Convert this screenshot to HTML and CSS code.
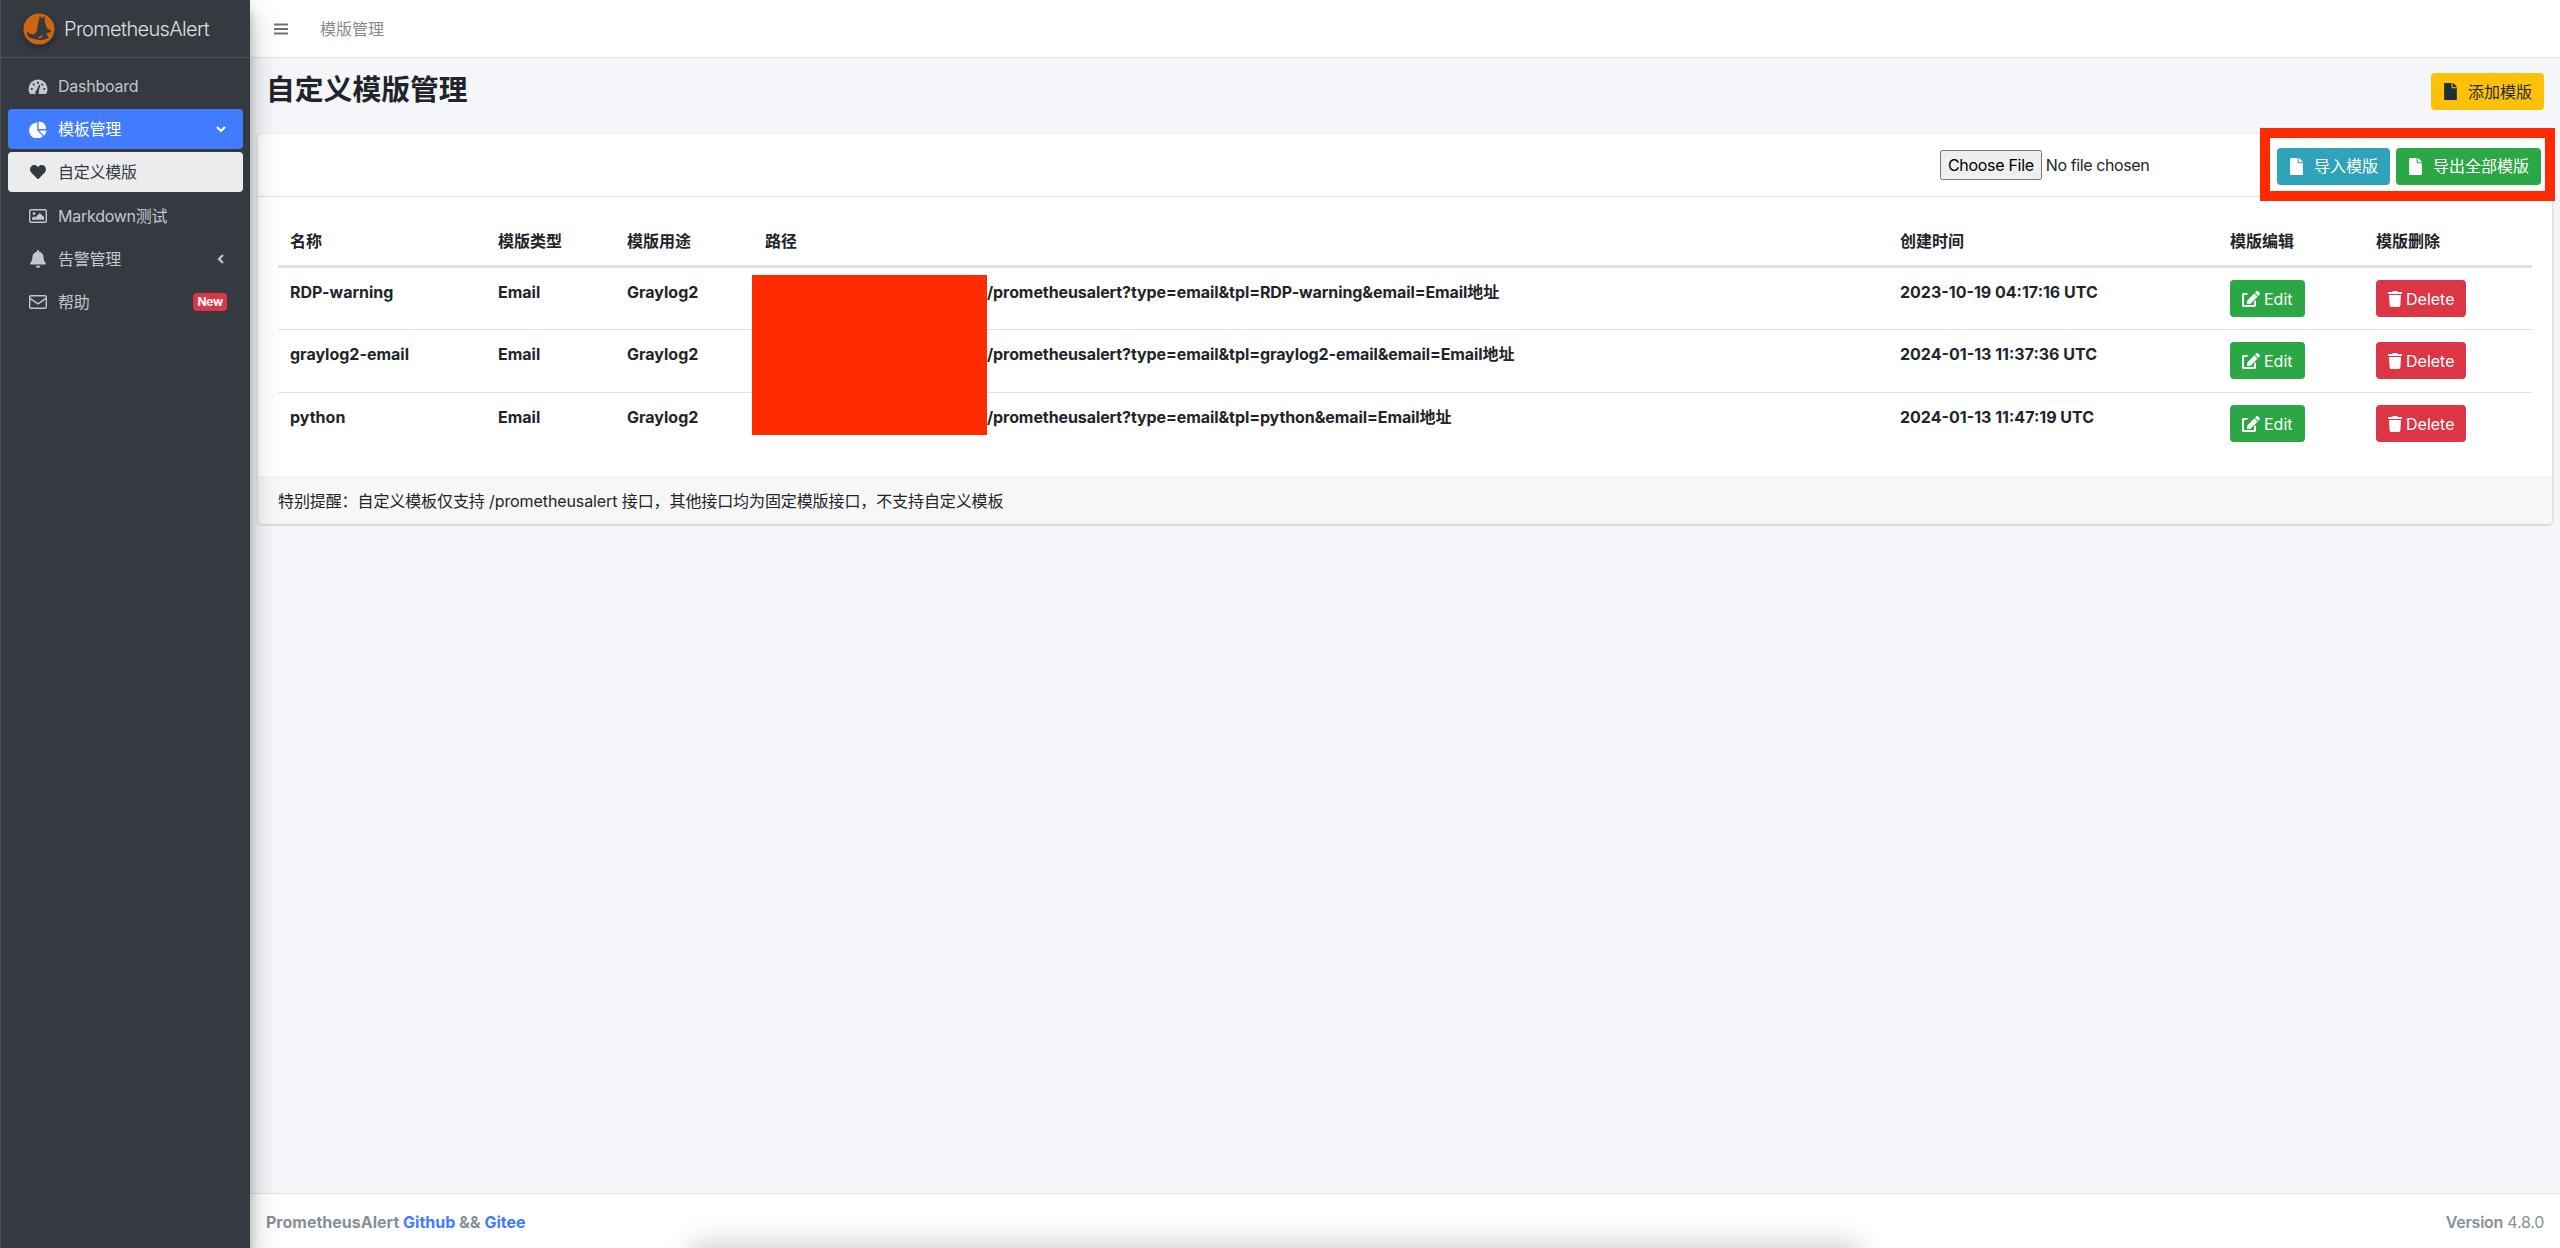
FILE: index.html
```html
<!DOCTYPE html>
<html lang="zh">
<head>
<meta charset="utf-8">
<title>PrometheusAlert</title>
<link rel="stylesheet" href="styles.css">
</head>
<body>
<svg class="defs" aria-hidden="true">
  <symbol id="i-file" viewBox="0 0 384 512"><path d="M224 136V0H24C10.7 0 0 10.7 0 24v464c0 13.3 10.7 24 24 24h336c13.3 0 24-10.7 24-24V160H248c-13.2 0-24-10.8-24-24zm160-14.1v6.1H256V0h6.1c6.4 0 12.5 2.5 17 7l97.9 98c4.5 4.5 7 10.6 7 16.9z"/></symbol>
  <symbol id="i-edit" viewBox="0 0 576 512"><path d="M402.6 83.2l90.2 90.2c3.8 3.8 3.8 10 0 13.8L274.4 405.6l-92.8 10.3c-12.4 1.4-22.9-9.1-21.5-21.5l10.3-92.8L388.8 83.2c3.8-3.8 10-3.8 13.8 0zm162-22.9l-48.8-48.8c-15.2-15.2-39.9-15.2-55.2 0l-35.4 35.4c-3.8 3.8-3.8 10 0 13.8l90.2 90.2c3.8 3.8 10 3.8 13.8 0l35.4-35.4c15.2-15.3 15.2-40 0-55.2zM384 346.2V448H64V128h73.9c3.2 0 6.2-1.3 8.5-3.5l40-40c7.6-7.6 2.2-20.5-8.5-20.5H48C21.5 64 0 85.5 0 112v352c0 26.5 21.5 48 48 48h352c26.5 0 48-21.5 48-48V306.2c0-10.7-12.9-16-20.5-8.5l-40 40c-2.2 2.3-3.5 5.3-3.5 8.5z"/></symbol>
  <symbol id="i-trash" viewBox="0 0 448 512"><path d="M432 32H312l-9.4-18.7A24 24 0 0 0 281.1 0H166.8a23.72 23.72 0 0 0-21.4 13.3L136 32H16A16 16 0 0 0 0 48v32a16 16 0 0 0 16 16h416a16 16 0 0 0 16-16V48a16 16 0 0 0-16-16zM53.2 467a48 48 0 0 0 47.9 45h245.8a48 48 0 0 0 47.9-45L416 128H32z"/></symbol>
</svg>
<div class="app">
  <aside class="sidebar">
    <div class="brand">
      <svg class="logo" viewBox="0 0 32 32">
        <circle cx="16" cy="16" r="15.5" fill="#cf650f"/>
        <path fill="#343a40" d="M16 6.400L17 2.800 18.800 5.700 21.300 2.800 22 10 24 15 29 19 23.500 20 25.600 25 21 26.500 17.800 27.200 11.400 26 7.500 25 5 23.200 3.600 17.800 6.400 20.600 10.700 21.700 13.800 18.500 14.500 14 15 10.700z"/>
        <path fill="#cf650f" d="M14.500 23.600Q17 24.400 20 21.500 19.500 25 16.500 25.400z"/>
      </svg>
      <span class="brand-text">PrometheusAlert</span>
    </div>
    <nav class="nav">
      <a class="nav-link">
        <span class="nav-icon"><svg viewBox="0 0 20 16" class="ic-w20"><path fill="currentColor" d="M10 1a9.5 9.5 0 0 0-9.500 9.500c0 1.700.4 3.200 1.200 4.500.2.300.5.500.9.500h14.800c.4 0 .7-.2.900-.5.800-1.300 1.200-2.800 1.200-4.500A9.500 9.500 0 0 0 10 1z"/><g fill="#343a40"><circle cx="3.800" cy="10.500" r="1.100"/><circle cx="16.200" cy="10.500" r="1.100"/><circle cx="5.700" cy="6" r="1.100"/><circle cx="10" cy="4.300" r="1.100"/><circle cx="14.300" cy="6" r="1.100"/><path d="M8.200 12.600l3-6.400 1.100.4-1.700 6.700a1.800 1.800 0 1 1-2.400-.7z"/></g></svg></span>
        <span>Dashboard</span>
      </a>
      <a class="nav-link is-active">
        <span class="nav-icon"><svg viewBox="0 0 544 512" class="ic-w20"><path fill="currentColor" d="M250 48v238l168 168A240 240 0 1 1 250 48zM290 12a228 228 0 0 1 228 228H290zM300 284h226a238 238 0 0 1-70 162z"/></svg></span>
        <span>模板管理</span>
        <svg class="caret" viewBox="0 0 12 12"><path d="M2 4l4 4 4-4"/></svg>
      </a>
      <a class="nav-link is-current">
        <span class="nav-icon"><svg viewBox="0 0 512 512" class="ic-w18"><path fill="currentColor" d="M462.3 62.600C407.500 15.900 326 24.300 275.700 76.200L256 96.500l-19.700-20.300C186.100 24.300 104.500 15.900 49.700 62.600c-62.800 53.600-66.100 149.800-9.900 207.900l193.500 199.800c12.500 12.900 32.800 12.900 45.300 0l193.500-199.800c56.300-58.100 53-154.300-9.800-207.900z"/></svg></span>
        <span>自定义模版</span>
      </a>
      <a class="nav-link">
        <span class="nav-icon"><svg viewBox="0 0 18 14" class="ic-w18"><rect x=".7" y=".7" width="16.600" height="12.600" rx="1.400" fill="none" stroke="currentColor" stroke-width="1.400"/><circle cx="5" cy="4.600" r="1.300" fill="currentColor"/><path fill="currentColor" d="M3 10.800V9l2-1.800 1.300 1.200L10.800 4 15 8v2.800z"/></svg></span>
        <span>Markdown测试</span>
      </a>
      <a class="nav-link">
        <span class="nav-icon"><svg viewBox="0 0 448 512" class="ic-w16"><path fill="currentColor" d="M224 512c35.320 0 63.970-28.650 63.970-64H160.030c0 35.350 28.650 64 63.970 64zm215.390-149.710c-19.320-20.760-55.470-51.990-55.470-154.290 0-77.700-54.480-139.900-127.940-155.160V32c0-17.670-14.320-32-31.980-32s-31.980 14.330-31.980 32v20.840C118.560 68.100 64.080 130.300 64.080 208c0 102.300-36.150 133.530-55.470 154.290-6 6.450-8.660 14.160-8.610 21.710.11 16.400 12.980 32 32.100 32h383.800c19.120 0 32-15.600 32.100-32 .05-7.550-2.610-15.270-8.610-21.710z"/></svg></span>
        <span>告警管理</span>
        <svg class="caret" viewBox="0 0 12 12"><path d="M8 2L4 6l4 4"/></svg>
      </a>
      <a class="nav-link">
        <span class="nav-icon"><svg viewBox="0 0 18 14" class="ic-w18"><rect x=".7" y=".7" width="16.600" height="12.600" rx="1.400" fill="none" stroke="currentColor" stroke-width="1.400"/><path d="M1 3.400l8 5.400 8-5.400" fill="none" stroke="currentColor" stroke-width="1.400"/></svg></span>
        <span>帮助</span>
        <span class="badge">New</span>
      </a>
    </nav>
  </aside>
  <div class="main">
    <header class="topbar">
      <svg class="bars" viewBox="0 0 14 12"><path d="M0 1.500h14M0 6h14M0 10.500h14"/></svg>
      <span class="crumb">模版管理</span>
    </header>
    <section class="content-head">
      <h1>自定义模版管理</h1>
      <a class="btn btn-yellow"><svg class="ic-file"><use href="#i-file"/></svg>添加模版</a>
    </section>
    <section class="card">
      <div class="card-head">
        <input class="file" type="file">
        <div class="head-btns">
          <a class="btn btn-teal"><svg class="ic-file"><use href="#i-file"/></svg>导入模版</a>
          <a class="btn btn-green"><svg class="ic-file"><use href="#i-file"/></svg>导出全部模版</a>
        </div>
      </div>
      <div class="card-body">
        <table class="table">
          <thead>
            <tr>
              <th class="c-name">名称</th><th class="c-type">模版类型</th><th class="c-use">模版用途</th><th class="c-path">路径</th><th class="c-time">创建时间</th><th class="c-edit">模版编辑</th><th>模版删除</th>
            </tr>
          </thead>
          <tbody>
            <tr>
              <td>RDP-warning</td><td>Email</td><td>Graylog2</td><td class="path">/prometheusalert?type=email&amp;tpl=RDP-warning&amp;email=Email地址</td><td>2023-10-19 04:17:16 UTC</td>
              <td><a class="btn btn-green btn-row"><svg class="ic-edit"><use href="#i-edit"/></svg>Edit</a></td>
              <td><a class="btn btn-red btn-row"><svg class="ic-trash"><use href="#i-trash"/></svg>Delete</a></td>
            </tr>
            <tr>
              <td>graylog2-email</td><td>Email</td><td>Graylog2</td><td class="path">/prometheusalert?type=email&amp;tpl=graylog2-email&amp;email=Email地址</td><td>2024-01-13 11:37:36 UTC</td>
              <td><a class="btn btn-green btn-row"><svg class="ic-edit"><use href="#i-edit"/></svg>Edit</a></td>
              <td><a class="btn btn-red btn-row"><svg class="ic-trash"><use href="#i-trash"/></svg>Delete</a></td>
            </tr>
            <tr>
              <td>python</td><td>Email</td><td>Graylog2</td><td class="path">/prometheusalert?type=email&amp;tpl=python&amp;email=Email地址</td><td>2024-01-13 11:47:19 UTC</td>
              <td><a class="btn btn-green btn-row"><svg class="ic-edit"><use href="#i-edit"/></svg>Edit</a></td>
              <td><a class="btn btn-red btn-row"><svg class="ic-trash"><use href="#i-trash"/></svg>Delete</a></td>
            </tr>
          </tbody>
        </table>
        <div class="redact"></div>
      </div>
      <div class="card-foot">特别提醒：自定义模板仅支持 /prometheusalert 接口，其他接口均为固定模版接口，不支持自定义模板</div>
    </section>
    <footer class="footer">
      <div class="foot-left">PrometheusAlert <a class="flink">Github</a> &amp;&amp; <a class="flink">Gitee</a></div>
      <div class="foot-right"><b>Version</b> 4.8.0</div>
      <div class="dock-shadow"></div>
    </footer>
  </div>
</div>
</body>
</html>
```
FILE: styles.css
```css
* { box-sizing: border-box; }
html, body { margin: 0; height: 100%; }
body {
  font-family: Inter, "Noto Sans CJK SC", "Liberation Sans", sans-serif;
  font-size: 16px;
  line-height: 1.5;
  color: #212529;
  background: #f4f6f9;
  overflow: hidden;
}
.defs { display: none; }
.app { display: flex; height: 1248px; border-top: 1px solid #e4e4e4; }

/* sidebar */
.sidebar {
  width: 250px;
  flex: none;
  background: #343a40;
  border-left: 1px solid #4a4f55;
  box-shadow: 0 14px 28px rgba(0,0,0,.25), 0 10px 10px rgba(0,0,0,.22);
  position: relative;
  z-index: 2;
  margin-top: -1px;
  padding-top: 1px;
}
.brand {
  height: 57px;
  display: flex;
  align-items: center;
  padding-left: 22px;
  border-bottom: 1px solid #4b545c;
}
.logo { width: 32px; height: 32px; margin-right: 9px; border-radius: 50%; box-shadow: 0 3px 6px rgba(0,0,0,.3); }
.brand-text { font-size: 20px; font-weight: 300; color: rgba(255,255,255,.85); letter-spacing: -.65px; }
.nav { padding: 8px 7px 0; display: flex; flex-direction: column; gap: 3.2px; }
.nav-link {
  height: 40px;
  display: flex;
  align-items: center;
  padding: 0 16px;
  border-radius: 4px;
  color: #c2c7d0;
  letter-spacing: -.25px;
}
.nav-link.is-active { background: #3f7cff; color: #fff; }
.nav-link.is-current { background: #ebecee; color: #343a40; }
.nav-icon { width: 28px; margin-right: 6px; display: flex; justify-content: center; align-items: center; flex: none; }
.ic-w20 { width: 20px; height: 17px; }
.ic-w18 { width: 18px; height: 16px; }
.ic-w16 { width: 16px; height: 18px; }
.caret { width: 12px; height: 12px; margin-left: auto; fill: none; stroke: currentColor; stroke-width: 2.2; }
.badge {
  margin-left: auto;
  background: #dc3545;
  color: #fff;
  font-size: 12px;
  font-weight: 700;
  line-height: 18px;
  padding: 0 4px;
  border-radius: 4px;
}

/* main */
.main { flex: 1; min-width: 0; display: flex; flex-direction: column; }
.topbar {
  height: 58px;
  margin-top: -1px;
  flex: none;
  background: #fff;
  border-bottom: 1px solid #dee2e6;
  display: flex;
  align-items: center;
  padding-left: 24px;
  padding-top: 1px;
  color: #878b90;
}
.bars { width: 14px; height: 12px; fill: none; stroke: #6c7075; stroke-width: 2; margin-right: 32px; }
.content-head {
  display: flex;
  justify-content: space-between;
  align-items: flex-start;
  padding: 15px 16px 24px 16px;
}
h1 { margin: 0; font-size: 28.8px; font-weight: 600; line-height: 34px; color: #212529; }

.btn {
  display: inline-flex;
  align-items: center;
  height: 37px;
  padding: 0 12px;
  border-radius: 4px;
  color: #fff;
  white-space: nowrap;
}
.btn-yellow { background: #ffc107; color: #1f2d3d; }
.btn-teal { background: #2fa3ba; }
.btn-green { background: #2ba745; }
.btn-red { background: #dc3545; }
.ic-file { width: 13px; height: 17px; fill: currentColor; margin-right: 11px; margin-left: 1px; }
.ic-edit { width: 18px; height: 16px; fill: currentColor; margin-right: 4px; }
.ic-trash { width: 14px; height: 16px; fill: currentColor; margin-right: 4px; }

.card {
  margin: 0 8px;
  background: #fff;
  border-radius: 4px;
  box-shadow: 0 0 1px rgba(0,0,0,.125), 0 1px 3px rgba(0,0,0,.2);
}
.card-head {
  height: 63px;
  display: flex;
  justify-content: flex-end;
  align-items: center;
  padding: 0 11px;
  border-bottom: 1px solid #dee2e6;
}
.file { width: 337px; font: 16px Inter, "Liberation Sans", sans-serif; letter-spacing: -.4px; }
.file::file-selector-button { padding: 3px 6px; margin-right: 4px; font: inherit; letter-spacing: -.3px; }
.head-btns { display: flex; gap: 6px; position: relative; margin-top: 2px; }
.head-btns::after {
  content: "";
  position: absolute;
  top: -20px;
  bottom: -16px;
  left: -17px;
  right: -14px;
  border: 10px solid #ff2a00;
  pointer-events: none;
}
.card-body { padding: 20px; position: relative; }
.table { width: 100%; border-collapse: collapse; table-layout: fixed; }
.table th, .table td { padding: 12px; text-align: left; vertical-align: top; font-weight: 700; }
.table th { border-bottom: 3px solid #dee2e6; font-weight: 600; }
.table td { border-top: 1px solid #dee2e6; height: 63px; white-space: nowrap; }
.table tbody tr:first-child td { border-top: 0; height: 61px; }
.c-name { width: 208px; }
.c-type { width: 129px; }
.c-use { width: 138px; }
.c-path { width: 1135px; }
.c-time { width: 330px; }
.c-edit { width: 146px; }
.path { padding-left: 234px !important; letter-spacing: -.09px; }
.btn-row { font-weight: 400; padding: 0 12px; }
.redact { position: absolute; left: 494px; top: 78px; width: 235px; height: 160px; background: #ff2a00; }
.card-foot {
  background: #f7f7f7;
  height: 48px;
  padding: 12px 20px;
  border-radius: 0 0 4px 4px;
  border-top: 1px solid #f2f2f2;
  letter-spacing: -.1px;
  color: #212529;
}

.footer {
  margin-top: auto;
  height: 55px;
  flex: none;
  background: #fff;
  border-top: 1px solid #dee2e6;
  padding: 16px 16px 0;
  display: flex;
  justify-content: space-between;
  color: #869099;
  position: relative;
  overflow: hidden;
}
.foot-left { font-weight: 700; }
.foot-right { letter-spacing: -.25px; }
.foot-right b { font-weight: 600; }
.flink { color: #3f7cff; }
.dock-shadow {
  position: absolute;
  left: 440px;
  right: 700px;
  bottom: -26px;
  height: 30px;
  background: #000;
  opacity: .2;
  filter: blur(14px);
  pointer-events: none;
}
```
